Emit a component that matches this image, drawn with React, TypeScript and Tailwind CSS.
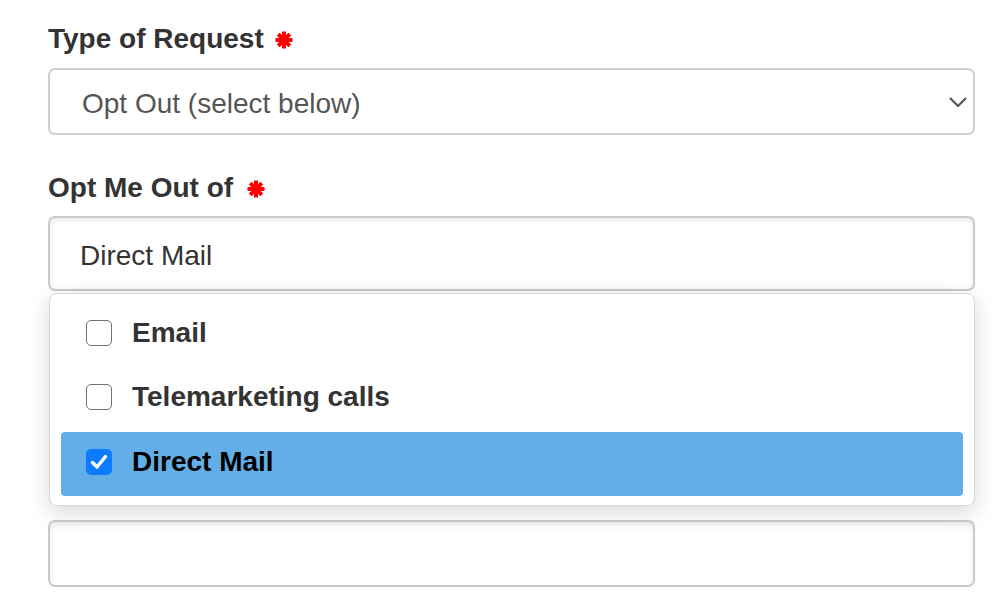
import React from "react";

function Asterisk() {
  return (
    <svg width="18" height="18" viewBox="0 0 18 18" className="ml-[11px] mt-[2px]" aria-hidden>
      <g stroke="#ff0000" strokeWidth="4" strokeLinecap="butt">
        <line x1="9" y1="0.5" x2="9" y2="17.5" />
        <line x1="0.5" y1="9" x2="17.5" y2="9" />
        <line x1="3.2" y1="3.2" x2="14.8" y2="14.8" />
        <line x1="14.8" y1="3.2" x2="3.2" y2="14.8" />
      </g>
      <circle cx="9" cy="9" r="4.5" fill="#ff0000" />
    </svg>
  );
}

function Box({ checked }: { checked?: boolean }) {
  if (checked) {
    return (
      <div className="w-[26px] h-[26px] rounded-[5px] bg-[#0d7bff] flex items-center justify-center shrink-0">
        <svg width="18" height="16" viewBox="0 0 18 16">
          <path d="M2.5 8.5 L7 13 L15.5 2.5" fill="none" stroke="#ffffff" strokeWidth="3.4" strokeLinecap="round" strokeLinejoin="round" />
        </svg>
      </div>
    );
  }
  return <div className="w-[26px] h-[26px] rounded-[5px] border-[1.5px] border-[#6f6f6f] bg-white shrink-0" />;
}

export default function App() {
  const font = { fontFamily: '"Liberation Sans", Arial, Helvetica, sans-serif' };
  return (
    <div className="w-[1006px] h-[610px] bg-white overflow-hidden" style={font}>
      <div className="pl-[48px] pr-[31px] pt-[17px]">
        <div className="flex items-center h-[40px] pt-[4px] text-[28px] font-bold text-[#333333]">
          <span>Type of Request</span>
          <Asterisk />
        </div>
        <div className="mt-[11px] h-[67px] rounded-[7px] border-2 border-[#cfcfcf] bg-white flex items-center justify-between pl-[32px] pr-[5px]">
          <span className="text-[28px] text-[#555555] pt-[4px]">Opt Out (select below)</span>
          <svg width="20" height="12" viewBox="0 0 20 12">
            <path d="M2 2 L10 10 L18 2" fill="none" stroke="#555555" strokeWidth="2.2" />
          </svg>
        </div>

        <div className="mt-[31px] flex items-center h-[40px] pt-[4px] text-[28px] font-bold text-[#333333]">
          <span>Opt Me Out of</span>
          <span className="ml-[3px] flex"><Asterisk /></span>
        </div>
        <div className="relative mt-[10px]">
          <div className="h-[75px] rounded-[7px] border-2 border-[#cacaca] bg-white shadow-[inset_0_3px_6px_rgba(0,0,0,0.08)] flex items-center pl-[30px]">
            <span className="text-[28px] text-[#333333] pt-[5px]">Direct Mail</span>
          </div>
          <div className="absolute left-[1px] right-0 top-[77px] z-10 rounded-[8px] border border-[#d8d8d8] bg-white shadow-[0_6px_22px_rgba(0,0,0,0.16)] pt-[10px] pb-[9px] px-[11px]">
            <div className="h-[64px] flex items-center pl-[25px] gap-[20px] pb-[6px]">
              <Box />
              <span className="text-[28px] font-bold text-[#333333]">Email</span>
            </div>
            <div className="h-[64px] flex items-center pl-[25px] gap-[20px] pb-[6px]">
              <Box />
              <span className="text-[28px] font-bold text-[#333333]">Telemarketing calls</span>
            </div>
            <div className="h-[64px] flex items-center pl-[25px] gap-[20px] rounded-[4px] bg-[#64aee7] pb-[4px]">
              <Box checked />
              <span className="text-[28px] font-bold text-[#000000]">Direct Mail</span>
            </div>
          </div>
          <div className="h-[229px]" />
          <div className="h-[67px] rounded-[7px] border-2 border-[#cacaca] bg-white shadow-[inset_0_3px_6px_rgba(0,0,0,0.08)]" />
        </div>
      </div>
    </div>
  );
}
